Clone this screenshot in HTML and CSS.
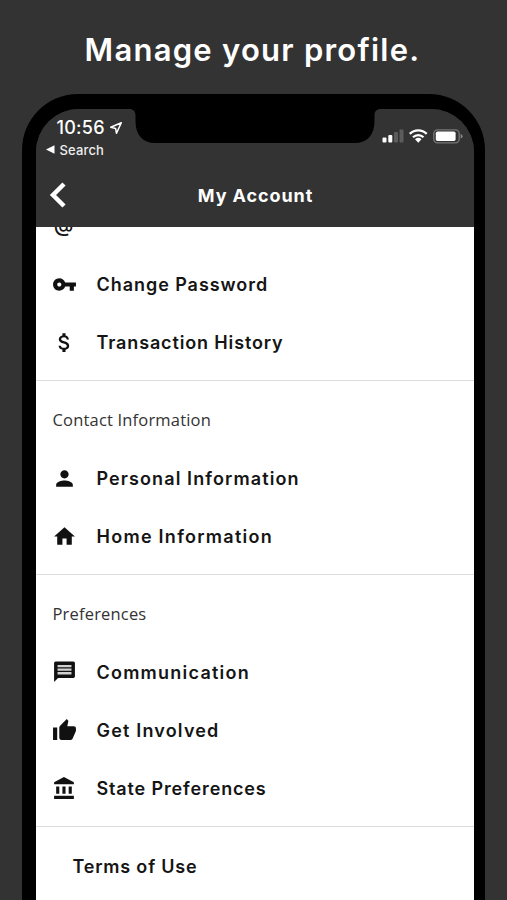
FILE: index.html
```html
<!DOCTYPE html>
<html lang="en">
<head>
<meta charset="utf-8">
<title>My Account</title>
<link rel="stylesheet" href="styles.css">
</head>
<body>
<h1 class="caption"><span>Manage your profile.</span></h1>
<div class="phone">
  <div class="screen">
    <svg class="notch" viewBox="0 0 252 36" aria-hidden="true"><path d="M0 0v1c4.500 0 6.500 2 6.500 7v5c0 14 7 22 20 22h199c13 0 20-8 20-22v-5c0-5 2-7 6.500-7v-1z"/></svg>
    <header class="header">
      <div class="status">
        <div class="status-left">
          <div class="clock"><span>10:56</span><svg viewBox="0 0 14 14"><path d="M12.300 1.700 1.700 6.200l4.900 1.200.9 4.900z"/></svg></div>
          <div class="return"><svg viewBox="0 0 9 9"><path d="M0 4.500 8.500.3v8.400z"/></svg><span>Search</span></div>
        </div>
        <svg class="signals" viewBox="0 0 82 18">
          <g fill="#fff"><rect x=".5" y="10.500" width="4" height="5" rx="1"/><rect x="6.300" y="8" width="4" height="7.500" rx="1"/></g>
          <g fill="#5c5c5c"><rect x="12" y="5" width="4" height="10.500" rx="1"/><rect x="17.500" y="2.500" width="4" height="13" rx="1"/></g>
          <g fill="none" stroke="#fff" stroke-width="2.300"><path d="M27.800 6.900a12 12 0 0 1 16.900 0"/><path d="M31 10.300a7.400 7.400 0 0 1 10.500 0"/></g>
          <path fill="#fff" d="M33 12.300a4.900 4.900 0 0 1 6.500 0l-3.200 3.400z"/>
          <rect x="51.800" y="2.800" width="25.400" height="13" rx="3.800" fill="none" stroke="#777" stroke-width="1.300"/>
          <rect x="53.800" y="4.600" width="19.800" height="9.400" rx="1.700" fill="#fff"/>
          <path fill="#858585" d="M78.600 7q2 .6 2 2.300t-2 2.300z"/>
        </svg>
      </div>
      <div class="nav">
        <svg class="back" viewBox="0 0 18 26"><path d="M15 2 4 13l11 11"/></svg>
        <h2><span>My Account</span></h2>
      </div>
    </header>
    <main class="content">
      <section class="scrolled">
        <div class="row"><span class="at">@</span></div>
        <div class="row"><svg class="icon" viewBox="0 0 24 24"><path d="M12.650 10C11.830 7.670 9.610 6 7 6c-3.310 0-6 2.690-6 6s2.690 6 6 6c2.610 0 4.830-1.670 5.650-4H17v4h4v-4h2v-4H12.650zM7 14c-1.100 0-2-.9-2-2s.9-2 2-2 2 .9 2 2-.9 2-2 2z"/></svg><span class="password">Change Password</span></div>
        <div class="row"><svg class="icon" viewBox="0 0 24 24"><path d="M11.800 10.900c-2.270-.59-3-1.200-3-2.150 0-1.090 1.010-1.850 2.700-1.850 1.780 0 2.440.85 2.500 2.100h2.210c-.07-1.720-1.120-3.300-3.210-3.810V3h-3v2.160c-1.940.42-3.500 1.680-3.500 3.610 0 2.310 1.910 3.460 4.700 4.130 2.500.6 3 1.480 3 2.410 0 .69-.49 1.790-2.700 1.790-2.060 0-2.870-.92-2.980-2.100h-2.200c.12 2.190 1.760 3.420 3.680 3.830V21h3v-2.150c1.950-.37 3.500-1.500 3.500-3.550 0-2.840-2.430-3.810-4.700-4.400z"/></svg><span class="transaction">Transaction History</span></div>
      </section>
      <section>
        <h3 class="row"><span>Contact Information</span></h3>
        <div class="row"><svg class="icon" viewBox="0 0 24 24"><path d="M12 12c2.210 0 4-1.790 4-4s-1.790-4-4-4-4 1.790-4 4 1.790 4 4 4zm0 2c-2.670 0-8 1.340-8 4v2h16v-2c0-2.660-5.330-4-8-4z"/></svg><span class="personal">Personal Information</span></div>
        <div class="row"><svg class="icon" viewBox="0 0 24 24"><path d="M10 20v-6h4v6h5v-8h3L12 3 2 12h3v8z"/></svg><span class="home">Home Information</span></div>
      </section>
      <section>
        <h3 class="row"><span>Preferences</span></h3>
        <div class="row"><svg class="icon" viewBox="0 0 24 24"><path d="M20.500 1.500h-17C2.600 1.500 2 2.200 2 3.100V21l3.800-3.800h14.700c.9 0 1.500-.7 1.500-1.600V3.100c0-.9-.6-1.600-1.500-1.600z"/><path fill="#d0d0d0" d="M5.300 4.800h13.400V7H5.300zM5.300 8.200h13.400v2.200H5.300zM5.300 11.600h13.400v2.200H5.300z"/></svg><span class="communication">Communication</span></div>
        <div class="row"><svg class="icon" viewBox="0 0 24 24"><path d="M1 21h4V9H1v12zm22-11c0-1.100-.9-2-2-2h-6.310l.95-4.570.03-.32c0-.41-.17-.79-.44-1.060L14.170 1 7.590 7.590C7.220 7.950 7 8.450 7 9v10c0 1.100.9 2 2 2h9c.83 0 1.540-.5 1.840-1.220l3.020-7.050c.09-.23.140-.47.140-.73v-2z"/></svg><span class="involved">Get Involved</span></div>
        <div class="row"><svg class="icon" viewBox="0 0 24 24"><path d="M4 10v7h3v-7H4zm6 0v7h3v-7h-3zM2 22h19v-3H2v3zm14-12v7h3v-7h-3zm-4.500-9L2 6v2h19V6l-9.500-5z"/></svg><span class="state">State Preferences</span></div>
      </section>
      <section class="legal"><div class="row"><span>Terms of Use</span></div></section>
    </main>
  </div>
</div>
</body>
</html>
```
FILE: styles.css
```css
* { box-sizing: border-box; }
body {
  margin: 0;
  height: 900px;
  overflow: hidden;
  display: flex;
  flex-direction: column;
  background: #333;
  color: #151515;
  font-family: Inter, "Liberation Sans", sans-serif;
}
svg { display: block; flex: none; }
h1, h2, h3 { margin: 0; }
.caption {
  flex: none;
  height: 94px;
  padding: 4px 2px 0 0;
  display: flex;
  align-items: center;
  justify-content: center;
  color: #fff;
  font-size: 31px;
  font-weight: 600;
  letter-spacing: 1.250px;
}
.phone {
  flex: 1;
  min-height: 0;
  margin: 0 22.500px 0 22px;
  padding: 14.500px 11px 0 13.500px;
  border-radius: 56px 56px 0 0;
  background: #000;
}
.screen {
  position: relative;
  height: 100%;
  overflow: hidden;
  border-radius: 43px 43px 0 0;
  background: #333;
}
.notch {
  position: absolute;
  z-index: 2;
  top: -1px;
  left: 93px;
  width: 252px;
  height: 36px;
}
.header {
  position: relative;
  z-index: 1;
  height: 118.500px;
  background: #333;
  color: #fff;
}
.status {
  height: 55.500px;
  padding: 8px 10px 0 10px;
  display: flex;
  justify-content: space-between;
}
.clock {
  height: 22px;
  padding-left: 11px;
  display: flex;
  align-items: center;
  gap: 4px;
  font-size: 18px;
  font-weight: 500;
  letter-spacing: .25px;
}
.clock svg { width: 14px; height: 14px; fill: none; stroke: #fff; stroke-width: 1.500; stroke-linejoin: round; }
.return {
  height: 22px;
  display: flex;
  align-items: center;
  gap: 5px;
  font-size: 13px;
  font-weight: 500;
  letter-spacing: .15px;
  color: #eee;
}
.return svg { width: 9px; height: 9px; fill: #fff; }
.signals { width: 82px; height: 18px; margin-top: 10px; }
.nav {
  height: 63px;
  display: grid;
  grid-template-columns: 40px 1fr 40px;
  align-items: center;
}
.back { width: 18px; height: 26px; margin: 0 0 2px 13px; fill: none; stroke: #fff; stroke-width: 4.500; }
.nav h2 { padding-left: 2px; text-align: center; font-size: 18px; font-weight: 700; letter-spacing: .9px; }
.content { height: 673px; overflow: hidden; background: #fff; }
section { padding: 10px 0 9px; border-bottom: 1px solid #ddd; }
.scrolled { margin-top: -40px; }
.row {
  height: 58px;
  padding-left: 16.500px;
  display: flex;
  align-items: center;
  gap: 19.500px;
  font-size: 18px;
  font-weight: 600;
  letter-spacing: .8px;
}
.password { letter-spacing: .95px; }
.transaction { letter-spacing: .86px; }
.personal { letter-spacing: 1.100px; }
.home { letter-spacing: 1.270px; }
.communication { letter-spacing: 1.230px; }
.involved { letter-spacing: 1.180px; }
.state { letter-spacing: .86px; }
h3.row {
  padding: 0 0 1px 17px;
  color: #333;
  font-family: "Open Sans", "Noto Sans", sans-serif;
  font-size: 16.500px;
  font-weight: 400;
  letter-spacing: .18px;
}
.icon { width: 25px; height: 25px; fill: #111; }
.at { width: 23px; text-align: center; font-size: 20px; line-height: 24px; padding-bottom: 3px; font-weight: 500; letter-spacing: 0; }
.legal { border: 0; }
.legal .row { padding-left: 37px; }
```
